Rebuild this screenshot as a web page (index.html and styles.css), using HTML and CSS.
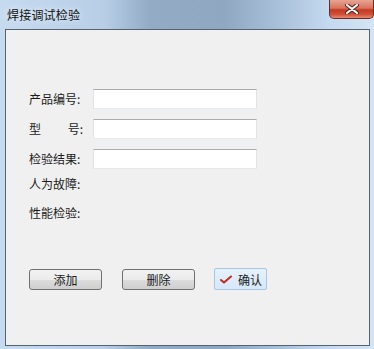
FILE: index.html
```html
<!DOCTYPE html>
<html lang="zh-CN">
<head>
  <meta charset="UTF-8" />
  <title>焊接调试检验</title>
  <link rel="stylesheet" href="styles.css">
</head>
<body>
  <div class="window">
    <div class="titlebar">
      <span class="title">焊接调试检验</span>
      <button class="close-btn" title="关闭">
        <svg width="14" height="10" viewBox="0 0 14 10">
          <path d="M2 1 L12 9 M12 1 L2 9" stroke="#5a1a12" stroke-width="4" stroke-linecap="round"/>
          <path d="M2 1 L12 9 M12 1 L2 9" stroke="#ffffff" stroke-width="2.2" stroke-linecap="round"/>
        </svg>
      </button>
    </div>

    <div class="client">
      <div class="field-row">
        <label for="productNo">产品编号:</label>
        <input type="text" id="productNo">
      </div>
      <div class="field-row">
        <label for="model" class="spread"><span>型</span><span>号:</span></label>
        <input type="text" id="model">
      </div>
      <div class="field-row">
        <label for="result">检验结果:</label>
        <input type="text" id="result">
      </div>
      <div class="text-row first">人为故障:</div>
      <div class="text-row second">性能检验:</div>

      <div class="button-row">
        <button class="btn">添加</button>
        <button class="btn">删除</button>
        <button class="btn-confirm">
          <svg width="12" height="9" viewBox="0 0 12 9">
            <path d="M1 5 L4 7.5 L11 1.5" stroke="#c4281e" stroke-width="2" fill="none" stroke-linecap="round" stroke-linejoin="round"/>
          </svg>
          <span>确认</span>
        </button>
      </div>
    </div>
  </div>
</body>
</html>
```

FILE: styles.css
```css
html, body {
  margin: 0;
  padding: 0;
}
body {
  font-family: "Noto Sans CJK SC", "Noto Sans", sans-serif;
  font-size: 12px;
  color: #1a1a1a;
}
.window {
  width: 374px;
  height: 349px;
  box-sizing: border-box;
  padding: 0 4px 3px 5px;
  display: flex;
  flex-direction: column;
  background: linear-gradient(to right, #c6dbf0 0%, #b7cee6 28%, #93abc5 40%, #8fa7c1 60%, #a9c1da 75%, #c4daef 88%, #d3e5f5 100%);
}
.titlebar {
  height: 29px;
  display: flex;
  justify-content: space-between;
  align-items: flex-start;
}
.title {
  margin: 7px 0 0 2px;
  font-size: 12px;
  line-height: 16px;
  letter-spacing: 0.2px;
  color: #101010;
  text-shadow: 0 0 6px rgba(255,255,255,0.9);
}
.close-btn {
  width: 45px;
  height: 19px;
  padding: 0;
  margin-right: -4px;
  border: 1px solid #6b2a22;
  border-top: none;
  border-radius: 0 0 5px 5px;
  background: linear-gradient(to bottom, #e8a493 0%, #d9735d 45%, #c23a20 55%, #d0503a 80%, #e88a70 100%);
  display: flex;
  align-items: center;
  justify-content: center;
}
.client {
  flex: 1;
  background-color: #f0f0f0;
  border: 1px solid #58626e;
  padding: 59px 0 0 23px;
}
.field-row {
  display: flex;
  align-items: center;
  height: 20px;
  margin-bottom: 10px;
}
.field-row label {
  width: 64px;
  line-height: 20px;
}
.field-row label.spread {
  display: flex;
  justify-content: space-between;
  width: 54px;
  margin-right: 10px;
}
.field-row input {
  width: 164px;
  height: 20px;
  box-sizing: border-box;
  margin: 0;
  background: #ffffff;
  border: 1px solid #dbdfe6;
  border-top-color: #abadb3;
  border-left-color: #e2e3ea;
  border-right-color: #e2e3ea;
  border-bottom-color: #e3e9ef;
}
.text-row {
  height: 20px;
  line-height: 20px;
}
.text-row.first {
  margin-top: -5px;
}
.text-row.second {
  margin-top: 9px;
}
.button-row {
  display: flex;
  align-items: center;
  margin-top: 45px;
}
.btn {
  width: 73px;
  height: 21px;
  margin-right: 20px;
  padding: 0;
  font-family: inherit;
  font-size: 12px;
  color: #1a1a1a;
  border: 1px solid #707070;
  border-radius: 3px;
  background: linear-gradient(to bottom, #f2f2f2 0%, #ebebeb 50%, #dddddd 51%, #cfcfcf 100%);
}
.btn:nth-child(2) {
  margin-right: 19px;
}
.btn-confirm {
  width: 53px;
  height: 22px;
  padding: 0 0 0 5px;
  display: flex;
  align-items: center;
  gap: 6px;
  font-family: inherit;
  font-size: 12px;
  color: #1a1a1a;
  border: 1px solid #a7c6e6;
  border-radius: 2px;
  background: linear-gradient(to bottom, #e6f1fc 0%, #d6e8fa 100%);
}
```
